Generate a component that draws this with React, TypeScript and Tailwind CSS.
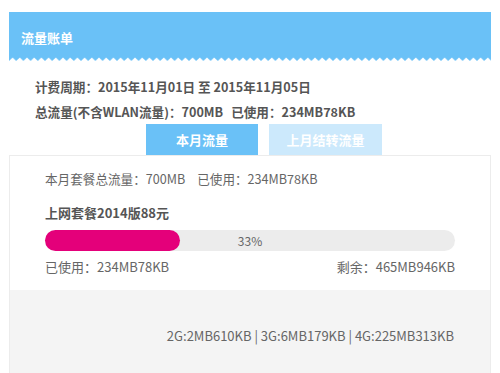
export default function App() {
  const used = 33;

  return (
    <div
      className="w-[500px] h-[373px] overflow-hidden bg-white text-[13px] text-[#666]"
      style={{ fontFamily: '"Noto Sans CJK SC", "Noto Sans", sans-serif' }}
    >
      {/* Header */}
      <div className="ml-[9px] mr-[9px] mt-[12px] relative">
        <div className="h-[49px] bg-[#6ac1f7] flex items-center pl-[12px] pt-[3px]">
          <span className="text-white font-bold text-[13px]">流量账单</span>
        </div>
        <svg className="absolute left-0 bottom-0 w-full h-[5px]" preserveAspectRatio="none">
          <defs>
            <pattern id="wave" width="7.2" height="5" patternUnits="userSpaceOnUse">
              <path d="M0 5 L3.6 1.5 L7.2 5 Z" fill="#fff" />
            </pattern>
          </defs>
          <rect width="100%" height="5" fill="url(#wave)" />
        </svg>
      </div>

      {/* Summary */}
      <div className="pl-[35px] pt-[13px] font-bold text-[#555] text-[12.6px] leading-[25px]">
        <div>计费周期：2015年11月01日 至 2015年11月05日</div>
        <div>
          总流量(不含WLAN流量)：700MB<span className="ml-[8px]">已使用：234MB78KB</span>
        </div>
      </div>

      {/* Tabs */}
      <div className="flex ml-[146px] gap-[11px]">
        <div className="w-[112px] h-[31px] bg-[#6ac1f7] text-white font-bold flex items-center justify-center">
          本月流量
        </div>
        <div className="w-[113px] h-[31px] bg-[#cce9fc] text-white font-bold flex items-center justify-center">
          上月结转流量
        </div>
      </div>

      {/* Card */}
      <div className="mx-[9px] border border-[#ececec] border-b-0">
        <div className="bg-white pl-[35px] pr-[35px] pt-[13px] pb-[13px]">
          <div className="leading-[20px] text-[12.6px]">
            本月套餐总流量：700MB<span className="ml-[12px]">已使用：234MB78KB</span>
          </div>
          <div className="mt-[14px] font-bold text-[#555] leading-[20px]">上网套餐2014版88元</div>
          <div className="mt-[7px] relative h-[21px] rounded-full bg-[#ececec]">
            <div className="h-full rounded-full bg-[#e4007a]" style={{ width: `${used}%` }} />
            <div className="absolute inset-0 flex items-center justify-center text-[12px] text-[#666]">
              {used}%
            </div>
          </div>
          <div className="mt-[6px] flex justify-between leading-[20px]">
            <span>已使用：234MB78KB</span>
            <span>剩余：465MB946KB</span>
          </div>
        </div>
        <div className="bg-[#f4f4f4] h-[90px] flex justify-end pr-[36px] pt-[36px] leading-[20px]">
          2G:2MB610KB | 3G:6MB179KB | 4G:225MB313KB
        </div>
      </div>
    </div>
  );
}
